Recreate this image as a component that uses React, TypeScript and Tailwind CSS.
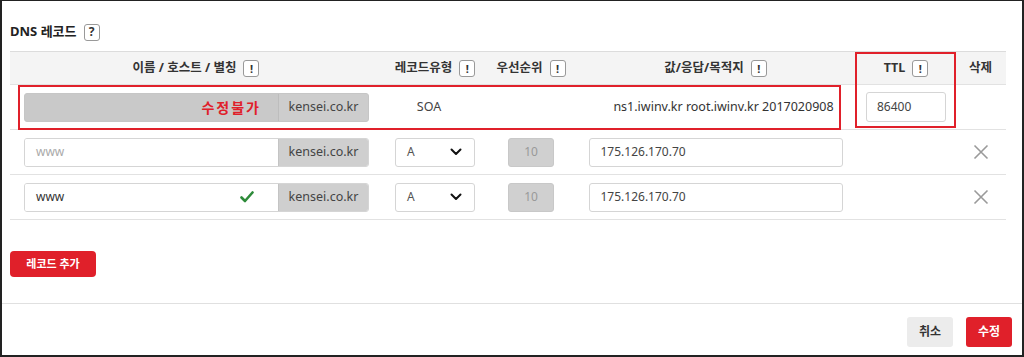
import React from "react";

const font = { fontFamily: '"Noto Sans", "Noto Sans CJK KR", sans-serif' };

function Help({ ch }: { ch: string }) {
  return (
    <span className="inline-flex items-center justify-center w-[16px] h-[17px] border border-[#999] rounded-[3px] bg-white text-[11px] font-bold text-[#333] leading-none ml-[7px]">
      {ch}
    </span>
  );
}

function Chevron() {
  return (
    <svg width="12" height="8" viewBox="0 0 12 8" fill="none">
      <path d="M1.5 1.5 L6 6 L10.5 1.5" stroke="#111" strokeWidth="2" strokeLinecap="round" strokeLinejoin="round" />
    </svg>
  );
}

function XIcon() {
  return (
    <svg width="16" height="16" viewBox="0 0 16 16" fill="none">
      <path d="M1.5 1.5 L14.5 14.5 M14.5 1.5 L1.5 14.5" stroke="#9a9a9a" strokeWidth="1.6" />
    </svg>
  );
}

function Check() {
  return (
    <svg width="14" height="12" viewBox="0 0 14 12" fill="none">
      <path d="M1.5 6.5 L5 10 L12.5 1.5" stroke="#2e8b3a" strokeWidth="2.6" strokeLinecap="round" strokeLinejoin="round" />
    </svg>
  );
}

function NameGroup({ value, placeholder, check }: { value?: string; placeholder?: string; check?: boolean }) {
  return (
    <div className="flex h-[29px] w-[345px] rounded-[3px] border border-[#d5d5d5] overflow-hidden">
      <div className="flex-1 bg-white flex items-center justify-between pl-[11px] pr-[24px] text-[12px]">
        <span className={value ? "text-[#333]" : "text-[#aaa]"}>{value ?? placeholder}</span>
        {check && <Check />}
      </div>
      <div className="w-[90px] bg-[#cfcfcf] border-l border-[#c4c4c4] flex items-center justify-center text-[12.5px] text-[#444]">
        kensei.co.kr
      </div>
    </div>
  );
}

function Row({ value, check }: { value?: string; check?: boolean }) {
  return (
    <div className="flex h-[45px] items-center border-b border-[#e2e2e2]">
      <div className="w-[372px] pl-[14px]">
        <NameGroup value={value} placeholder="www" check={check} />
      </div>
      <div className="w-[106px] flex justify-center">
        <div className="w-[80px] h-[29px] border border-[#d5d5d5] rounded-[3px] bg-white flex items-center justify-between pl-[11px] pr-[12px] text-[12px] text-[#555]">
          <span>A</span>
          <Chevron />
        </div>
      </div>
      <div className="w-[86px] flex justify-center">
        <div className="w-[46px] h-[29px] rounded-[3px] bg-[#d0d0d0] border border-[#c8c8c8] flex items-center justify-center text-[12px] text-[#999]">
          10
        </div>
      </div>
      <div className="w-[283px] flex justify-center">
        <div className="w-[254px] h-[29px] border border-[#d5d5d5] rounded-[3px] bg-white flex items-center pl-[11px] text-[12px] text-[#444]">
          175.126.170.70
        </div>
      </div>
      <div className="w-[98px]" />
      <div className="w-[51px] flex justify-center">
        <XIcon />
      </div>
    </div>
  );
}

export default function App() {
  return (
    <div style={font} className="h-[357px] w-[1024px] bg-white border-t border-l-2 border-r-2 border-b-2 border-[#222] flex flex-col overflow-hidden">
      <div className="flex items-center pl-[8px] pt-[20px] h-[50px] pb-[8px]">
        <span className="text-[13px] font-bold text-[#222]">DNS 레코드</span>
        <span className="inline-flex items-center justify-center w-[16px] h-[17px] border border-[#999] rounded-[3px] bg-white text-[12px] font-bold text-[#333] leading-none ml-[7px]">?</span>
      </div>
      <div className="ml-[8px] w-[996px] relative">
        {/* header */}
        <div className="flex h-[34px] items-center bg-[#f4f4f4] border-t border-[#dcdcdc] border-b border-b-[#e2e2e2] text-[12.5px] font-bold text-[#333]">
          <div className="w-[372px] flex justify-center items-center">이름 / 호스트 / 별칭<Help ch="!" /></div>
          <div className="w-[106px] flex justify-center items-center">레코드유형<Help ch="!" /></div>
          <div className="w-[86px] flex justify-center items-center">우선순위<Help ch="!" /></div>
          <div className="w-[283px] flex justify-center items-center">값/응답/목적지<Help ch="!" /></div>
          <div className="w-[98px] flex justify-center items-center">TTL<Help ch="!" /></div>
          <div className="w-[51px] flex justify-center items-center">삭제</div>
        </div>
        {/* SOA row */}
        <div className="flex h-[45px] items-center border-b border-[#e2e2e2]">
          <div className="w-[372px] pl-[14px]">
            <div className="flex h-[29px] w-[345px] rounded-[3px] border border-[#c6c6c6] overflow-hidden bg-[#c9c9c9]">
              <div className="flex-1 flex items-center justify-end pr-[17px] text-[14px] font-bold tracking-[2px] text-[#e0202a]">
                수정불가
              </div>
              <div className="w-[90px] bg-[#cdcdcd] border-l border-[#bdbdbd] flex items-center justify-center text-[12.5px] text-[#444]">
                kensei.co.kr
              </div>
            </div>
          </div>
          <div className="w-[106px] flex justify-center text-[12.5px] text-[#444] pr-[12px]">SOA</div>
          <div className="w-[86px]" />
          <div className="w-[283px] flex justify-center text-[12.5px] text-[#333] pl-[16px]">ns1.iwinv.kr root.iwinv.kr 2017020908</div>
          <div className="w-[98px] flex justify-center">
            <div className="w-[80px] h-[30px] border border-[#d5d5d5] rounded-[3px] bg-white flex items-center pl-[10px] text-[12px] text-[#444]">
              86400
            </div>
          </div>
          <div className="w-[51px]" />
        </div>
        <Row />
        <Row value="www" check />
        {/* red outlines */}
        <div className="absolute left-[8px] top-[34px] w-[823px] h-[45px] border-2 border-[#e0202a] pointer-events-none" />
        <div className="absolute left-[845px] top-[1px] w-[101px] h-[76px] border-2 border-[#e0202a] pointer-events-none" />
      </div>
      <div className="pl-[8px] pt-[30px]">
        <button className="h-[26px] w-[86px] rounded-[4px] bg-[#e0202a] text-white text-[11px] font-bold">레코드 추가</button>
      </div>
      <div className="mt-[26px] border-t border-[#e0e0e0] flex justify-end gap-[13px] pr-[10px] pt-[13px]">
        <button className="h-[30px] w-[46px] rounded-[3px] bg-[#ececec] text-[#333] text-[12px] font-bold">취소</button>
        <button className="h-[30px] w-[46px] rounded-[3px] bg-[#e0202a] text-white text-[12px] font-bold">수정</button>
      </div>
    </div>
  );
}
